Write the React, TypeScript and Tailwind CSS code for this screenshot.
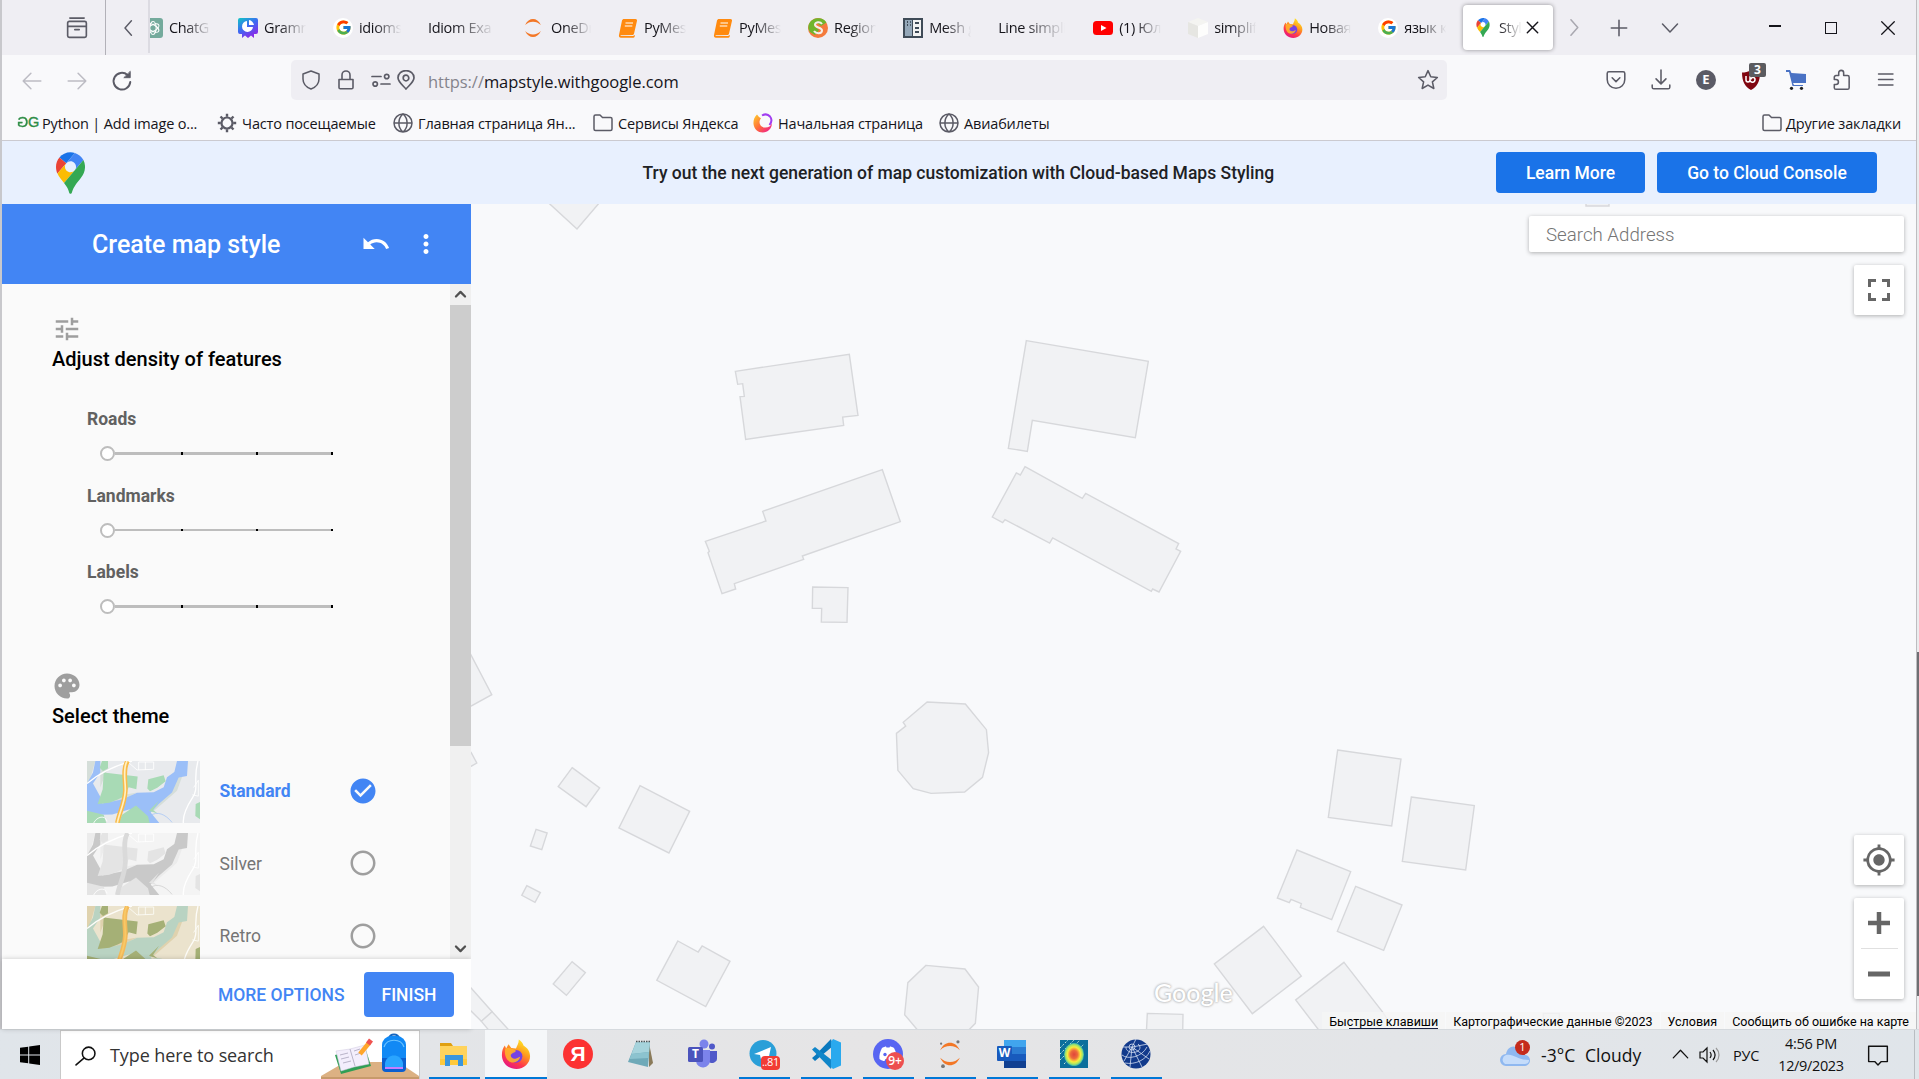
import type { ReactNode } from "react";
import {
  MdTune, MdPalette, MdUndo, MdMoreVert, MdMyLocation, MdCheckCircle, MdRadioButtonUnchecked,
} from "react-icons/md";
import { FcGoogle } from "react-icons/fc";

const UI = "font-['Open_Sans','Noto_Sans',sans-serif]";

function Pin({ className = "" }: { className?: string }) {
  return (
    <svg viewBox="0 0 92.3 132.3" className={className}>
      <path fill="#1a73e8" d="M60.2 2.2C55.8.8 51 0 46.1 0 32 0 19.3 6.4 10.8 16.5l21.8 18.3L60.2 2.2z" />
      <path fill="#ea4335" d="M10.8 16.5C4.1 24.5 0 34.9 0 46.1c0 8.7 1.7 15.7 4.6 22l28-33.3-21.8-18.3z" />
      <path fill="#4285f4" d="M46.2 28.5c9.8 0 17.7 7.9 17.7 17.7 0 4.3-1.6 8.3-4.2 11.4 0 0 13.9-16.6 27.5-32.7-5.6-10.8-15.3-19-27-22.7L32.6 34.8c3.3-3.8 8.1-6.3 13.6-6.3" />
      <path fill="#fbbc04" d="M46.2 63.8c-9.8 0-17.7-7.9-17.7-17.7 0-4.3 1.5-8.3 4.1-11.3l-28 33.3c4.8 10.6 12.8 19.2 21 29.9l34.1-40.5c-3.3 3.9-8.1 6.3-13.5 6.3" />
      <path fill="#34a853" d="M59.1 109.2c15.4-24.1 33.3-35 33.3-63 0-7.7-1.9-14.9-5.2-21.3L25.6 98c2.6 3.4 5.3 7.3 7.9 11.3 9.4 14.5 6.8 23.1 12.8 23.1s3.4-8.7 12.8-23.2" />
    </svg>
  );
}

function Firefox({ className = "" }: { className?: string }) {
  return (
    <svg viewBox="0 0 32 32" className={className}>
      <defs>
        <linearGradient id="ffx" x1="0.8" y1="0.1" x2="0.3" y2="1">
          <stop offset="0" stopColor="#ffe226" />
          <stop offset="0.35" stopColor="#ff9a1e" />
          <stop offset="0.7" stopColor="#ff3a4a" />
          <stop offset="1" stopColor="#e31587" />
        </linearGradient>
      </defs>
      <path fill="url(#ffx)" d="M19 .5c3 2 4.500 4.200 5 6.500 4 2.500 7 6 7 11.500C31 26 24.500 32 16.500 32 8 32 1.500 26 1 18 .8 13 2 10 4 7l1.500 3L8 5.500l3 4 5 .5c1-3 3-5 3-9.500z" />
      <circle cx="16" cy="18.500" r="6.800" fill="#7542e5" />
      <path fill="#ffb02a" d="M4.500 10c4-1.500 9 .5 11.500 2.500-1 2.500-4.500 2-5.500 4.500-.6 2.500 2 4.500 5 4 3-.6 3.500-2 5-2-1 4-4 6-7.500 6C7 25 3 19 4.500 10z" opacity="0.9" />
    </svg>
  );
}

function FirefoxRing({ className = "" }: { className?: string }) {
  return (
    <svg viewBox="0 0 20 20" className={className}>
      <defs>
        <linearGradient id="ring" x1="0" y1="0.2" x2="0.8" y2="1">
          <stop offset="0" stopColor="#ffbd2e" />
          <stop offset="0.5" stopColor="#ff6a3c" />
          <stop offset="1" stopColor="#f0238a" />
        </linearGradient>
      </defs>
      <path fill="url(#ring)" d="M4 1.500C1 4 .3 8 .5 11c.6 5 4.500 8.500 9.300 8.500 5 0 9.200-4 9.200-9.500-1 3-3.500 4.500-6.500 4.500-4 0-6-2.500-6-5.500 0-1.500.8-3 1.500-3.800L6 4 4 1.500z" />
      <path fill="none" stroke="#a13df0" strokeWidth="2" d="M9 2.500C12 .8 15 1.200 17 3.500c2 2.500 1.500 6-.5 8.500" />
    </svg>
  );
}

function Jupyter({ className = "", dots = false }: { className?: string; dots?: boolean }) {
  return (
    <svg viewBox="0 0 32 32" className={className}>
      <path fill="#f37726" d="M5.500 12C8 6.500 12 4 16 4s8 2.500 10.500 8C23.500 9 20 7.500 16 7.500S8.500 9 5.500 12zM5.500 20c2.500 5.500 6.500 8 10.500 8s8-2.500 10.500-8c-3 3-6.500 4.500-10.500 4.500S8.500 23 5.500 20z" />
      {dots && (
        <g fill="#767677">
          <circle cx="24.500" cy="3" r="1.700" />
          <circle cx="6.500" cy="5" r="1.200" />
          <circle cx="8.500" cy="29" r="2" />
        </g>
      )}
    </svg>
  );
}

const Book = () => (
  <svg viewBox="0 0 20 20" className="size-5">
    <path fill="#ff8a0f" d="M6 1h11.500c1 0 1.700.8 1.500 1.700l-3 13c-.2.800-1 1.300-1.800 1.300H3c-.5 0-.6.700 0 .8l12 .2 2-1-.5 2c-.2.500-.7.800-1.200.8H3C1.500 19.800.6 18.500 1 17L4 2.500C4.300 1.600 5 1 6 1z" />
    <path stroke="#fff" strokeWidth="1.100" d="M7.500 5h7.500M6.800 8h7.500" />
  </svg>
);

const favicons: Record<string, ReactNode> = {
  gpt: (
    <svg viewBox="0 0 20 20" className="size-5">
      <rect width="20" height="20" rx="3" fill="#74aa9c" />
      <g fill="none" stroke="#fff" strokeWidth="1.100">
        <ellipse cx="10" cy="10" rx="3.200" ry="6.500" />
        <ellipse cx="10" cy="10" rx="3.200" ry="6.500" transform="rotate(60 10 10)" />
        <ellipse cx="10" cy="10" rx="3.200" ry="6.500" transform="rotate(120 10 10)" />
      </g>
    </svg>
  ),
  gram: (
    <svg viewBox="0 0 20 20" className="size-5">
      <defs>
        <linearGradient id="gram" x1="0" y1="0" x2="0.6" y2="1">
          <stop offset="0" stopColor="#12c7c4" />
          <stop offset="0.500" stopColor="#3b6cf2" />
          <stop offset="1" stopColor="#8a2be8" />
        </linearGradient>
      </defs>
      <path fill="url(#gram)" d="M2 0h16a2 2 0 0 1 2 2v12a2 2 0 0 1-2 2h-2v4l-3-2.500L10 20l-3-2.500L4 20v-4H2a2 2 0 0 1-2-2V2a2 2 0 0 1 2-2z" />
      <path fill="#fff" d="M9 3a5.500 5.500 0 1 0 6 6H9V3zM11 2c2.500.3 4.500 2.500 5 5h-5V2z" />
    </svg>
  ),
  google: (
    <span className="flex size-5 items-center justify-center rounded-full bg-white">
      <FcGoogle className="size-[17px]" />
    </span>
  ),
  jup: <Jupyter className="-ml-0.5 size-6" />,
  book: <Book />,
  region: (
    <svg viewBox="0 0 20 20" className="size-5">
      <circle cx="10" cy="10" r="10" fill="#f47a3c" />
      <path fill="#6fb52c" d="M1 6C3 1.500 8-.5 13 .5c3 1 4.500 2.500 5.500 4L13 8 9 5 6 8l5 4-4 5-5-3C0 11 0 8 1 6z" />
      <path fill="none" stroke="#f3efe9" strokeWidth="2" d="M14 6c-2-3-7-2-7 .8C7 10 14 9 14 12.500c0 3.500-6 3.500-8 .5" />
    </svg>
  ),
  mesh: (
    <svg viewBox="0 0 20 20" className="size-5">
      <rect width="20" height="20" fill="#3f4b57" />
      <rect x="2" y="2" width="7" height="16" fill="#94a7b8" />
      <rect x="10" y="2" width="8" height="16" fill="#f2f2f2" />
      <path stroke="#3f4b57" strokeWidth="2" d="M12 5h4M12 10h4M12 14h4M4 4h1M4 7h1M7 4h0.800M7 7h.8" />
    </svg>
  ),
  yt: (
    <svg viewBox="0 0 20 20" className="size-5">
      <rect y="3" width="20" height="14" rx="3.500" fill="#f00" />
      <path fill="#fff" d="M8 7l5.500 3L8 13z" />
    </svg>
  ),
  cube: (
    <svg viewBox="0 0 20 20" className="size-5">
      <path fill="#f4f4f1" d="M0 4L10 0l10 4-10 4z" />
      <path fill="#e6e6e2" d="M0 4l10 4v12L0 16z" />
      <path fill="#fdfdfc" d="M20 4L10 8v12l10-4z" />
    </svg>
  ),
  ffx: <Firefox className="size-5" />,
};

const tabs: [string, string][] = [
  ["gpt", "ChatG"], ["gram", "Gramn"], ["google", "idioms"], ["", "Idiom Exa"], ["jup", "OneDr"],
  ["book", "PyMes"], ["book", "PyMes"], ["region", "Region"], ["mesh", "Mesh g"], ["", "Line simpli"],
  ["yt", "(1) Юл"], ["cube", "simplif"], ["ffx", "Новая"], ["google", "язык к"],
];

function Stroke({ d, className, w = 1.5, vb = "0 0 20 20" }: { d: string; className: string; w?: number; vb?: string }) {
  return (
    <svg viewBox={vb} className={className} fill="none" stroke="currentColor" strokeWidth={w} strokeLinecap="round" strokeLinejoin="round">
      <path d={d} />
    </svg>
  );
}

function TabStrip() {
  return (
    <div className="flex h-[55px] shrink-0 items-center bg-[#efeef3] text-[#5b5b66]">
      <div className="flex h-full w-[104px] items-center justify-end border-r border-[#b2b1b8] pr-[17px]">
        <Stroke className="size-[22px]" d="M3.500 1h13M1.500 5.500a1.500 1.500 0 0 1 1.500-1.500h14a1.500 1.500 0 0 1 1.500 1.500V17a1.500 1.500 0 0 1-1.500 1.500H3A1.500 1.500 0 0 1 1.500 17zM1.500 8.500h17M8 11.500h4" />
      </div>
      <div className="flex h-full w-[42px] items-center justify-center">
        <Stroke className="-mr-1 size-4" d="M13 1L5 10l8 9" w={1.800} />
      </div>
      <div className="h-[53px] w-0.5 self-start bg-[#dcdbe2]" />
      <div className="flex w-[1313px] overflow-hidden">
        <div className="-ml-[7px] flex">
          {tabs.map(([icon, title], i) => (
            <div key={i} className="flex w-[95.020px] shrink-0 items-center pr-[25px]">
              {icon && <span className="mr-1.5 shrink-0">{favicons[icon]}</span>}
              <span className={`min-w-0 flex-1 pt-px whitespace-nowrap text-[14.500px] tracking-[-0.350px] text-[#15141a] ${UI} [mask-image:linear-gradient(to_right,#000_35%,transparent_96%)]`}>
                {title}
              </span>
            </div>
          ))}
        </div>
      </div>
      <div className="flex h-[45px] w-[90px] shrink-0 items-center rounded bg-white pl-3 shadow-[0_0_4px_rgba(0,0,0,0.4)]">
        <Pin className="h-[19px] w-4" />
        <span className={`ml-2 w-[23px] pt-px whitespace-nowrap text-[14.500px] tracking-tight text-[#15141a] ${UI} [mask-image:linear-gradient(to_right,#000,transparent)]`}>Styl</span>
        <Stroke className="ml-1 size-[13px] text-[#15141a]" d="M2 2l16 16M18 2L2 18" w={2.200} />
      </div>
      <Stroke className="ml-3 size-[17px] text-[#a9a8b0]" d="M7 1l8 9-8 9" w={1.800} />
      <Stroke className="ml-[26px] size-[22px]" d="M10 3v14M3 10h14" w={1.400} />
      <Stroke className="ml-[30px] size-5" d="M2.500 6l7.500 8 7.500-8" />
      <div className="flex flex-1 items-center justify-end gap-[44px] pr-[21px] text-[#15141a]">
        <span className="mt-[-3px] h-[1.500px] w-3 bg-current" />
        <span className="size-3 border-[1.500px] border-current" />
        <Stroke className="size-[14px]" d="M1 1l18 18M19 1L1 19" w={1.800} />
      </div>
    </div>
  );
}

function NavBar() {
  return (
    <div className="flex h-[50px] shrink-0 items-center bg-[#f9f9fb] text-[#5b5b66]">
      <div className="flex w-[289px] items-center pt-px pl-[19px]">
        <Stroke className="size-[22px] text-[#bdbcc4]" d="M18 10H2M9 3l-7 7 7 7" w={1.400} />
        <Stroke className="ml-[23px] size-[22px] text-[#bdbcc4]" d="M2 10h16M11 3l7 7-7 7" w={1.400} />
        <svg viewBox="0 0 20 20" className="ml-[23px] size-[22px]" fill="none" stroke="currentColor" strokeWidth="1.800" strokeLinecap="round">
          <path d="M17.500 11A7.600 7.600 0 1 1 15 4.500" />
          <path d="M17.500 1.500V7h-5.500z" fill="currentColor" strokeWidth="0.800" strokeLinejoin="round" />
        </svg>
      </div>
      <div className="flex h-10 w-[1156px] items-center rounded-[5px] bg-[#efeef3] pl-2.5">
        <Stroke className="size-5" d="M10 1l8 3v5c0 5-4 8.500-8 10-4-1.500-8-5-8-10V4z" />
        <Stroke className="ml-[15px] size-5" d="M3 9.500h14v8a1.300 1.300 0 0 1-1.300 1.300H4.300A1.300 1.300 0 0 1 3 17.500zM6 9.500V5a4 4 0 0 1 8 0v4.500" w={1.600} />
        <Stroke className="ml-[15px] size-5" d="M1 6.500h9M10 14h9M13.500 6.500a2.200 2.200 0 1 0 4.400 0 2.200 2.200 0 1 0-4.400 0M2 14a2.200 2.200 0 1 0 4.400 0A2.200 2.200 0 1 0 2 14" w={1.700} />
        <Stroke className="ml-[5px] size-5" d="M10 19C7 15.500 2 12 2 7.800A7.800 7 0 0 1 18 7.800C18 12 13 15.500 10 19zM7.200 8a2.800 2.800 0 1 0 5.600 0 2.800 2.800 0 1 0-5.600 0" w={1.700} />
        <span className={`ml-3 pt-[4px] text-[16.500px] tracking-[-0.050px] text-[#15141a] ${UI}`}>
          <span className="text-[#85848c]">https://</span>mapstyle.withgoogle.com
        </span>
        <Stroke className="mr-2 ml-auto size-[22px]" d="M10 1.500l2.500 5.600 6 .6-4.500 4 1.300 6L10 14.600 4.700 17.700l1.300-6-4.500-4 6-.6z" w={1.400} />
      </div>
      <div className="flex flex-1 items-center pl-[158px]">
        <Stroke className="size-[22px]" d="M3.500 2.500h13A1.500 1.500 0 0 1 18 4v5.500a8 8 0 0 1-16 0V4a1.500 1.500 0 0 1 1.500-1.500zM6.500 8l3.500 3.500L13.500 8" w={1.400} />
        <Stroke className="ml-[23px] size-[22px]" d="M10 1v12M5.500 9l4.500 4.500L14.500 9M2 14.500v2A1.500 1.500 0 0 0 3.500 18h13a1.500 1.500 0 0 0 1.500-1.500v-2" w={1.400} />
        <span className="ml-[24px] flex size-5 items-center justify-center rounded-full bg-[#5b5b66] font-['Open_Sans'] text-[13px] font-bold text-white">E</span>
        <span className="relative ml-[25px]">
          <svg viewBox="0 0 20 20" className="size-5">
            <path fill="#800610" d="M10 0c3 2 6 2.500 9 2.500C19 12 16 16.500 10 20 4 16.500 1 12 1 2.500 4 2.500 7 2 10 0z" />
            <path fill="none" stroke="#fff" strokeWidth="1.500" d="M5 6v4c0 2.500 4 2.500 4 0V6m0 4c0 3 5 3 5-.5a2 2 0 1 0-4 0" />
          </svg>
          <span className="absolute -top-[7px] left-2 flex h-[14px] w-[17px] items-center justify-center rounded-[2px] bg-[#5b5b5f] font-['Open_Sans'] text-[12px] font-bold text-white">3</span>
        </span>
        <svg viewBox="0 0 20 20" className="ml-[25px] size-5">
          <path fill="#4a72c4" d="M0 0h4l1.500 3L20 4v9H7l1 2h9v1H6.500L3 2H0z" />
          <circle cx="5.500" cy="18.300" r="1.600" fill="#222" />
          <circle cx="15.500" cy="18.300" r="1.600" fill="#222" />
        </svg>
        <Stroke className="ml-[25px] size-[22px]" d="M7 6V3.500a2.200 2.200 0 0 1 4.500 0V6H15a1.500 1.500 0 0 1 1.500 1.500V17a1.500 1.500 0 0 1-1.500 1.500H4.500A1.500 1.500 0 0 1 3 17v-3h1.500a2 2 0 0 0 0-4.500H3v-2A1.500 1.500 0 0 1 4.500 6z" w={1.400} />
        <Stroke className="ml-[23px] size-5" d="M2.500 4h14.500M2.500 9.500h14.500M2.500 15h14.500" w={1.400} />
      </div>
    </div>
  );
}

const Globe = () => (
  <Stroke className="size-5" d="M1 10a9 9 0 1 0 18 0 9 9 0 1 0-18 0M1 10h18M10 1C4.500 5.500 4.500 14.500 10 19M10 1c5.500 4.500 5.500 13.500 0 18" w={1.500} />
);
const Folder = () => (
  <Stroke className="size-5" d="M1 3.500A1.500 1.500 0 0 1 2.500 2H7l2.500 2.500h8A1.500 1.500 0 0 1 19 6v10a1.500 1.500 0 0 1-1.500 1.500h-15A1.500 1.500 0 0 1 1 16z" w={1.500} />
);

function Gear() {
  return (
    <svg viewBox="0 0 20 20" className="size-5" fill="none" stroke="currentColor">
      <circle cx="10" cy="10" r="5.500" strokeWidth="2.200" />
      <path strokeWidth="2.400" d="M10 .8v3M10 16.200v3M.8 10h3M16.200 10h3M3.500 3.500l2 2M14.500 14.500l2 2M3.500 16.500l2-2M14.500 5.500l2-2" />
    </svg>
  );
}

const bookmarks: { icon: ReactNode; label: string; cls: string }[] = [
  { icon: <span className="flex w-5 justify-center pl-0.5 font-['Liberation_Sans'] text-[14.500px] tracking-[-1px] text-[#2f8d46] [-webkit-text-stroke:0.400px_#2f8d46]"><span className="-scale-x-100">G</span>G</span>, label: "Python | Add image o...", cls: "w-[200px]" },
  { icon: <Gear />, label: "Часто посещаемые", cls: "w-[176px]" },
  { icon: <Globe />, label: "Главная страница Ян...", cls: "w-[200px]" },
  { icon: <Folder />, label: "Сервисы Яндекса", cls: "w-[160px]" },
  { icon: <FirefoxRing className="size-5" />, label: "Начальная страница", cls: "w-[186px]" },
  { icon: <Globe />, label: "Авиабилеты", cls: "w-[120px]" },
];

function Bookmarks() {
  const t = `whitespace-nowrap pt-0.5 text-[14.500px] tracking-[-0.160px] text-[#15141a] ${UI}`;
  return (
    <div className="flex h-9 shrink-0 items-center border-b border-[#cbcad0] bg-[#f9f9fb] pl-[15px] text-[#5b5b66]">
      {bookmarks.map((b) => (
        <div key={b.label} className={`flex shrink-0 items-center gap-[5px] ${b.cls}`}>
          <span className="shrink-0">{b.icon}</span>
          <span className={t}>{b.label}</span>
        </div>
      ))}
      <div className="mr-[15px] ml-auto flex items-center gap-[4px]">
        <Folder />
        <span className={t}>Другие закладки</span>
      </div>
    </div>
  );
}

function Banner() {
  const btn = "flex h-[41px] items-center justify-center rounded bg-[#1a73e8] pt-0.5 text-[17.500px] font-medium text-white";
  return (
    <div className="flex h-[63px] shrink-0 items-center bg-[#e8f0fe]">
      <Pin className="ml-[54px] h-[42px] w-[29px]" />
      <span className="ml-[557.500px] pt-0.5 text-[17.500px] font-medium text-[#202124]">
        Try out the next generation of map customization with Cloud-based Maps Styling
      </span>
      <div className="mr-[39px] ml-auto flex gap-3">
        <div className={`w-[149px] ${btn}`}>Learn More</div>
        <div className={`w-[220px] ${btn}`}>Go to Cloud Console</div>
      </div>
    </div>
  );
}

function Slider({ label, thin = false }: { label: string; thin?: boolean }) {
  return (
    <div className="h-[76.500px]">
      <div className="text-[17.500px] leading-6 font-bold text-[#616161]">{label}</div>
      <div className="mt-[15px] ml-[13px] flex h-[15px] w-[233px] items-center">
        <span className="size-[15px] shrink-0 rounded-full border-2 border-[#bdbdbd] bg-white" />
        <div className={`flex flex-1 bg-[#bdbdbd] ${thin ? "h-0.5" : "h-[3px]"}`}>
          <span className="ml-[66px] w-0.5 bg-black" />
          <span className="ml-[73px] w-0.5 bg-black" />
          <span className="ml-auto w-0.5 bg-black" />
        </div>
      </div>
    </div>
  );
}

type Palette = { land: string; shade: string; water: string; park: string; road: string; hwy: string; core: string };

function Thumb({ c }: { c: Palette }) {
  return (
    <svg viewBox="0 0 339 187" preserveAspectRatio="none" className="h-[62px] w-[113px] shrink-0">
      <rect width="339" height="187" fill={c.land} />
      <path fill={c.shade} d="M0 0h25L5 70H0zM250 60l40-25-20 55-40 35-35 30-15-20zM40 20h25l-10 20-15 40zM150 95l-60 30-60 8 20-20z" />
      <path fill={c.water} d="M25 0h15v35L18 68l22 40 5 20 60-12 45-20 50-2 30-15 10-30 22-16 8-33h33l-3 45-25 5-20 45-40 35-24 25 30 37h-48l-12-38-35-8-50 15-70 2-10-8V75l22-40z" />
      <path fill={c.park} d="M45 0h18v22L48 30 38 20zM50 35l102 12-4 38-23-6-13 27-20 10-25 10-35 4 15-45zM184 55l46-12 6 18-25 20-22 10-8-8zM0 150l50 12 8 25H0zM95 187l10-25 42-28 36 33 5 20zM326 130l13-6v52l-14-10zM186 150l30-30-18 28 14 10z" />
      <g fill="none" stroke={c.road}>
        <path strokeWidth="4" d="M0 68C30 42 70 18 135 0M333 0c-16 55 4 80-16 110-18 28-30 55-28 77" />
        <path strokeWidth="2.500" d="M125 5l25 22 50-2V3h-45v24M175 3v24M320 80l14-22v48l-18-4M20 187c10-20 35-25 40-5" />
      </g>
      <path fill="none" stroke={c.water} strokeWidth="2" d="M190 165c20-15 45-5 65 20" />
      <path fill="none" stroke={c.hwy} strokeWidth="14" d="M122 0C106 25 116 60 115 90c-2 38-18 65-24 97" />
      <path fill="none" stroke={c.core} strokeWidth="5" d="M120 0C106 25 116 60 115 90c-2 38-18 65-24 97" />
    </svg>
  );
}

const themes: { name: string; active?: boolean; c: Palette }[] = [
  { name: "Standard", active: true, c: { land: "#e8eaed", shade: "#d5ded9", water: "#9bbff8", park: "#a8dab5", road: "#ffffff", hwy: "#f9bb4a", core: "#fff1c4" } },
  { name: "Silver", c: { land: "#f4f4f4", shade: "#ececec", water: "#c9c9c9", park: "#e4e4e4", road: "#ffffff", hwy: "#dadada", core: "#dadada" } },
  { name: "Retro", c: { land: "#ebe3cd", shade: "#dfd2ae", water: "#b9d3c2", park: "#a5b076", road: "#fdfcf8", hwy: "#f3b95a", core: "#f8c967" } },
];

function Sidebar() {
  return (
    <aside className="flex w-[469px] shrink-0 flex-col bg-[#fafafa]">
      <header className="flex h-20 shrink-0 items-center bg-[#4285f4] text-white">
        <h1 className="ml-[90px] pt-0.5 text-[25px] font-medium">Create map style</h1>
        <MdUndo className="ml-[81px] size-[30px]" />
        <MdMoreVert className="ml-5 size-[30px]" />
      </header>
      <div className="flex min-h-0 flex-1">
        <div className="min-w-0 flex-1 overflow-hidden">
          <section className="pt-[30px] pl-[50px]">
            <MdTune className="size-[30px] text-[#9e9e9e]" />
            <h2 className="text-[20px] leading-[30px] font-medium text-black">Adjust density of features</h2>
            <div className="mt-[33px] pl-[35px]">
              <Slider label="Roads" />
              <Slider label="Landmarks" thin />
              <Slider label="Labels" />
            </div>
          </section>
          <section className="pt-[34px] pl-[50px]">
            <MdPalette className="size-[30px] text-[#9e9e9e]" />
            <h2 className="text-[20px] leading-[30px] font-medium text-black">Select theme</h2>
            <div className="mt-[30px] flex flex-col gap-[10.500px] pl-[35px]">
              {themes.map((t) => (
                <div key={t.name} className="flex items-center">
                  <Thumb c={t.c} />
                  <span className={`ml-[19.500px] w-[128.500px] text-[17.500px] ${t.active ? "font-bold text-[#4285f4]" : "text-[#757575]"}`}>{t.name}</span>
                  {t.active ? <MdCheckCircle className="-mt-0.5 size-[30px] text-[#4285f4]" /> : <MdRadioButtonUnchecked className="-mt-0.5 size-[30px] text-[#9e9e9e]" />}
                </div>
              ))}
            </div>
          </section>
        </div>
        <div className="flex w-[21px] flex-col items-center bg-[#f0f0f0] text-[#505050]">
          <Stroke className="my-1 size-[13px] shrink-0" d="M3 13l7-7 7 7" w={3.500} />
          <div className="h-[441px] w-full bg-[#cdcdcd]" />
          <Stroke className="mt-auto mb-1 size-[13px]" d="M3 7l7 7 7-7" w={3.500} />
        </div>
      </div>
      <footer className="relative flex h-[70px] shrink-0 items-center justify-end bg-white pr-[17px] text-[17.500px] font-medium shadow-[0_0_5px_rgba(0,0,0,0.2)]">
        <span className="pt-0.5 text-[#4285f4]">MORE OPTIONS</span>
        <span className="ml-[19.500px] flex h-[45px] w-[90px] items-center justify-center rounded bg-[#4285f4] pt-0.5 text-white">FINISH</span>
      </footer>
    </aside>
  );
}

const mapGroups: { t: string; shapes: string[] }[] = [
  {
    t: "translate(690 320) scale(0.33333)",
    shapes: [
      "136,154 478,103 504,286 458,291 461,316 167,358 150,230 163,229 158,191 143,193",
      "1009,62 1375,124 1336,353 1027,301 1012,394 955,385",
      "46,664 228,603 218,574 577,449 631,605 337,708 341,718 133,791 137,807 96,821 54,698 58,694",
      "1005,440 1177,535 1187,520 1466,671 1458,687 1472,694 1407,816 1388,807 1384,814 1088,654 1079,669 945,599 938,608 907,591 979,459 991,465",
      "368,801 474,803 471,907 394,906 395,865 367,865",
    ],
  },
  {
    t: "translate(460 640) scale(0.35714 0.33333)",
    shapes: [
      "-20,-40 31,45 89,164 31,198 -20,220",
      "-20,320 31,337 47,369 31,379 -20,400",
      "314,383 391,444 353,500 275,440",
      "504,437 643,514 585,639 445,564",
      "213,568 244,579 229,629 197,618",
      "187,737 225,758 210,787 173,766",
      "314,965 351,998 298,1066 261,1032",
      "610,903 667,936 678,918 756,964 688,1100 551,1021",
      "1308,186 1415,192 1474,269 1480,338 1463,412 1413,456 1319,460 1269,446 1226,391 1222,280 1248,258 1241,247",
      "1305,976 1414,987 1452,1041 1443,1150 1420,1175 1285,1175 1245,1124 1254,1028",
      "-20,984 31,1044 90,1115 60,1144 31,1113 -20,1060",
      "90,1115 140,1174 84,1175 60,1144",
    ],
  },
  {
    t: "translate(1130 740) scale(0.33333)",
    shapes: [
      "623,30 813,57 785,258 595,232",
      "844,171 1033,197 1007,390 817,364",
      "501,330 662,395 605,539 511,502 514,491 483,478 478,488 442,474",
      "677,439 816,495 761,631 622,574",
      "401,559 514,708 367,821 253,672",
      "642,667 757,815 800,880 574,880 497,780",
      "52,820 159,823 158,880 49,880",
      "1240,820 1288,820 1288,880 1240,880",
    ],
  },
  { t: "translate(0 0)", shapes: ["540,195 577,229 606,195", "1586,195 1609,195 1609,206 1586,206"] },
];

function MapView() {
  const card = "rounded-[2px] bg-white shadow-[0_1px_4px_rgba(0,0,0,0.3)]";
  return (
    <main className="relative min-w-0 flex-1 overflow-hidden bg-[#f8f9fb]">
      <svg viewBox="471 204 1445 825" className="block h-[825px] w-[1445px]">
        {mapGroups.map((g) => (
          <g key={g.t} transform={g.t} fill="#f1f2f4" stroke="#d7d8db" strokeWidth="1.400">
            {g.shapes.map((s) => <polygon key={s} points={s} vectorEffect="non-scaling-stroke" />)}
          </g>
        ))}
      </svg>
      <div className={`absolute top-3 right-3 flex h-9 w-[375px] items-center pt-0.5 pl-[17px] text-[18.700px] font-light text-[#757575] ${card}`}>Search Address</div>
      <div className={`absolute top-[61px] right-3 flex size-[50px] items-center justify-center text-[#666] ${card}`}>
        <svg viewBox="0 0 22 22" className="size-[22px]" fill="none" stroke="currentColor" strokeWidth="3"><path d="M1.500 8V1.500H8M14 1.500h6.500V8M20.500 14v6.500H14M8 20.500H1.500V14" /></svg>
      </div>
      <div className={`absolute top-[631px] right-3 flex size-[50px] items-center justify-center text-[#666] ${card}`}><MdMyLocation className="size-[34px]" /></div>
      <div className={`absolute top-[694px] right-3 flex h-[101px] w-[50px] flex-col items-center text-[#666] ${card}`}>
        <svg viewBox="0 0 22 22" className="my-[14px] size-[22px]"><path stroke="currentColor" strokeWidth="4.500" d="M11 0v22M0 11h22" /></svg>
        <span className="h-px w-[37px] bg-[#e0e0e0]" />
        <svg viewBox="0 0 22 22" className="mt-[14px] size-[22px]"><path stroke="currentColor" strokeWidth="5" d="M0 11h22" /></svg>
      </div>
      <div className="absolute top-[772px] left-[683px] font-['Lato'] text-[25px] leading-8 font-medium text-white [text-shadow:0_0_2px_#aaa,0_0_3px_#bbb]">Google</div>
      <div className="absolute right-0 bottom-0 flex gap-px text-[12.500px] leading-[15px] text-black *:bg-[#f5f5f5]/80 *:px-[7px] *:pt-0.5">
        <span className="relative">
          Быстрые клавиши
          <span className="absolute right-[7px] bottom-0 left-[27px] h-px bg-[#1a2040]" />
        </span>
        <span>Картографические данные ©2023</span>
        <span>Условия</span>
        <span>Сообщить об ошибке на карте</span>
      </div>
    </main>
  );
}

const Y = "size-[30px]";
const apps: { node: ReactNode; bar?: boolean; active?: boolean }[] = [
  { bar: true, node: (
    <svg viewBox="0 0 30 30" className={Y}>
      <path fill="#e0a010" d="M1 4h11l2 3H1z" /><path fill="#ffd35c" d="M1 7h27v19H1z" /><path fill="#ffc93c" d="M1 20h27v6H1z" />
      <path fill="#3b96dd" d="M6 16h18v11h-5v-6h-8v6H6z" />
    </svg>) },
  { bar: true, active: true, node: <Firefox className={Y} /> },
  { node: <span className="flex size-[30px] items-center justify-center rounded-full bg-[#fc3232] font-['Liberation_Sans'] text-[21px] font-bold text-white">Я</span> },
  { node: (
    <svg viewBox="0 0 30 30" className={Y}>
      <path fill="#8a7a5a" d="M24 4l4 20-4 4z" /><path fill="#6fa9b8" d="M11 3h14l-2 25-20-5z" /><path fill="#a6d3dc" d="M11 3h14l-1 10L6.500 15z" /><path fill="#8cc3cf" d="M6.500 15L24 13l-.5 6L4.500 20z" /><path stroke="#4a5558" strokeWidth="1.500" strokeDasharray="1.500 1" d="M11 2.500h14" />
    </svg>) },
  { node: (
    <span className="relative">
      <svg viewBox="0 0 30 30" className={Y}>
        <circle cx="17" cy="5" r="4.500" fill="#7b83eb" /><circle cx="25" cy="7.500" r="3" fill="#5059c9" /><path fill="#5059c9" d="M22 12h8v8a5 5 0 0 1-8 3z" /><path fill="#7b83eb" d="M9 11h14v10a7 7 0 0 1-14 1z" />
        <rect x="1" y="8" width="15" height="15" rx="1.500" fill="#4b53bc" />
      </svg>
      <span className="absolute top-2 left-px flex size-[15px] items-center justify-center font-['Open_Sans'] text-[12px] font-bold text-white">T</span>
    </span>) },
  { bar: true, node: (
    <span className="relative">
      <svg viewBox="0 0 30 30" className={Y}><circle cx="14" cy="14.500" r="13.500" fill="#2a9fd8" /><path fill="#fff" d="M5 15l17-7-3 14-5-4-2 2.500-1-4.500z" /></svg>
      <span className="absolute top-[17px] left-[12px] flex h-[14px] w-[19px] items-center justify-center rounded bg-[#f23c34] font-['Open_Sans'] text-[11px] tracking-[-0.300px] text-white">..81</span>
    </span>) },
  { bar: true, node: (
    <svg viewBox="0 0 30 30" className={Y}>
      <path fill="#0a79be" d="M20 0L4 16.500 1 19l3 3L22 7z" /><path fill="#1186c9" d="M22 22L4 8 1 10.500 20 30z" /><path fill="#2aa9ee" d="M22 0l8 3.500v23L22 30l-2-2V3z" />
    </svg>) },
  { bar: true, node: (
    <span className="relative">
      <svg viewBox="0 0 30 30" className={Y}><circle cx="15" cy="15" r="15" fill="#5865f2" /><path fill="#fff" d="M9 9c2-1 3-1.500 4-1.500l.5 1h3l.5-1c1 0 2.500.5 4 1.500 2 4 3 7 2.500 11-2 1.500-3.500 2-5 2L17.500 20h-5L11.500 22c-1.500 0-3-.5-5-2C6 16 7 13 9 9z" /><circle cx="12" cy="15.500" r="1.700" fill="#5865f2" /></svg>
      <span className="absolute top-[13px] left-[13px] flex size-[18px] items-center justify-center rounded-full bg-[#ed4f4f] font-['Open_Sans'] text-[12px] font-semibold text-white">9+</span>
    </span>) },
  { bar: true, node: <Jupyter dots className="size-[30px]" /> },
  { bar: true, node: (
    <span className="relative">
      <svg viewBox="0 0 30 30" className={Y}>
        <path fill="#41a5ee" d="M7 1h22v7H7z" /><path fill="#2b7cd3" d="M7 8h22v7H7z" /><path fill="#185abd" d="M7 15h22v7H7z" /><path fill="#103f91" d="M7 22h22v7H7z" />
        <rect y="7" width="15" height="15" rx="1" fill="#185abd" />
      </svg>
      <span className="absolute top-[7px] left-0 flex size-[15px] items-center justify-center font-['Open_Sans'] text-[12px] font-bold text-white">W</span>
    </span>) },
  { bar: true, node: (
    <svg viewBox="0 0 28 28" className="size-7">
      <defs>
        <radialGradient id="heat">
          <stop offset="0" stopColor="#e0453a" /><stop offset="0.35" stopColor="#ec6a3c" /><stop offset="0.5" stopColor="#f7a63a" />
          <stop offset="0.65" stopColor="#f6ee3c" /><stop offset="0.85" stopColor="#a5e36a" /><stop offset="1" stopColor="#2fb3b0" />
        </radialGradient>
      </defs>
      <rect width="28" height="28" fill="#0b6f9c" /><path stroke="#bfe6dd" strokeWidth="1" strokeDasharray="2 1.500" d="M0 8L8 0M0 14L14 0M0 20L20 0M4 24L24 4" />
      <ellipse cx="14" cy="14.500" rx="10" ry="11.500" fill="url(#heat)" />
    </svg>) },
  { bar: true, node: (
    <svg viewBox="0 0 30 30" className={Y}>
      <circle cx="15" cy="15" r="14.500" fill="#123a8c" /><g fill="none" stroke="#d5dff2" strokeWidth="0.800"><path d="M11 8L3 22M11 8l-2 20M11 8l10 20M11 8l17 12M11 8l16-3M11 8L15 0M11 8L2 8M5 8a7 5 0 1 0 12-3M1 16c6 5 20 2 25-8M4 24c10 2 21-3 25-12" /><circle cx="11" cy="8" r="3" /></g>
    </svg>) },
];

function Taskbar() {
  return (
    <div className={`flex h-[50px] shrink-0 border-t border-[#d6dade] bg-linear-to-r from-[#e0e5ea] via-[#e6e5e6] via-45% to-[#e0e5ea] text-[#111] ${UI}`}>
      <div className="flex w-[60px] items-center justify-center">
        <svg viewBox="0 0 20 20" className="size-5"><path d="M0 2.800L8.200 1.700v7.800H0zM9.200 1.500L20 0v9.500H9.200zM0 10.500h8.200v7.800L0 17.200zM9.200 10.500H20V20L9.200 18.500z" /></svg>
      </div>
      <div className="flex w-[360px] items-center overflow-hidden border border-b-0 border-[#c9c9c9] bg-white">
        <Stroke className="ml-[14px] size-[21px]" d="M7 8a6 6 0 1 0 12 0 6 6 0 1 0-12 0M8.500 12.500L1 19" w={1.500} />
        <span className="ml-[14px] w-[165px] text-[18px] tracking-[-0.100px] whitespace-nowrap text-[#333]">Type here to search</span>
        <svg viewBox="0 0 98 47" className="ml-auto h-[47px] w-[98px] shrink-0">
          <path fill="#dcb183" d="M0 44l24-14h53l21 14v3H0z" /><path fill="#c79a6b" d="M0 45h98v2H0z" />
          <g transform="translate(0 1)">
            <path fill="#2f9e55" d="M14 22l30-8 6 19-30 8z" /><path fill="#f3eefc" stroke="#cfc8de" strokeWidth="0.500" d="M15 18l14-2 15-4 4 19-15 3-13 4z" /><path stroke="#b9b4c9" strokeWidth="1" fill="none" d="M29 16l5 17M19 22l8-2M20 26l8-2M22 30l8-2M33 18l6-2M34 22l6-2" />
            <path stroke="#ffa62b" strokeWidth="4.500" d="M39 21l9-11" /><path stroke="#ef5350" strokeWidth="5" d="M47 11l3-4" />
          </g>
          <path fill="none" stroke="#1565c0" strokeWidth="2" d="M68 7c0-6 10-6 10 0" />
          <rect x="61" y="4" width="24" height="36" rx="9" fill="#1189f5" /><path fill="#0b5fd0" d="M61 26h24v10a4 4 0 0 1-4 4H65a4 4 0 0 1-4-4z" /><path fill="#2aa5ff" d="M64 31c2-10 16-10 18 0v4H64z" /><path stroke="#c77dff" strokeWidth="2" d="M64 36h18" /><path fill="none" stroke="#6cc3ff" strokeWidth="1.200" d="M63 15c3-9 17-9 20 0" />
        </svg>
      </div>
      <div className="ml-[3px] flex">
        {apps.map((a, i) => (
          <div key={i} className={`flex w-[62px] flex-col items-center ${a.active ? "bg-[#f5f7f9]" : ""}`}>
            <div className="flex flex-1 items-center justify-center">{a.node}</div>
            <div className={`h-0.5 ${a.active ? "w-full" : "w-[51px]"} ${a.bar ? "bg-[#0078d7]" : ""}`} />
          </div>
        ))}
      </div>
      <div className="ml-auto flex items-center border-r border-[#b8bdc2] pr-[25px]">
        <span className="relative">
          <svg viewBox="0 0 30 26" className="-mt-0.5 h-[26px] w-[30px]"><path fill="#8fb8f0" d="M6 25a6 6 0 0 1 0-12C7 7 12 4 16 6c4 1 6 4 6 8 5-1 8 2 8 5.500S27 25 24 25z" /><path fill="#c5dcfa" d="M5 23a5 5 0 0 1 1-9c7-2 12 5 23 5 0 3-2 4-5 4z" /></svg>
          <span className="absolute -top-[3px] left-[15px] flex size-[15px] items-center justify-center rounded-full bg-[#c42b1c] text-[11px] text-white">1</span>
        </span>
        <span className="ml-[11px] w-11 pt-0.5 text-[17.500px]">-3°C</span>
        <span className="w-[87px] pt-0.5 text-[17.500px]">Cloudy</span>
        <Stroke className="size-[17px]" d="M1.500 14L10 5l8.500 9" w={1.500} />
        <svg viewBox="0 0 22 18" className="ml-2.5 h-[18px] w-[22px]" fill="none" stroke="currentColor" strokeWidth="1.200"><path d="M1 6h3l4-4v14l-4-4H1zM11 6c1.500 2 1.500 4 0 6M14 4c2.500 3 2.500 7 0 10" /><path stroke="#999" d="M17 2c4 4 4 10 0 14" /></svg>
        <span className="ml-[12px] w-11 pt-0.5 text-[14.500px] tracking-[-0.200px]">РУС</span>
        <div className="flex w-[68px] flex-col items-center text-[14.500px] leading-[22px] tracking-[-0.350px] whitespace-nowrap"><span>4:56 PM</span><span>12/9/2023</span></div>
        <Stroke className="ml-[22px] size-[22px]" d="M1.500 2h17v14h-5.500l-3 3-3-3H1.500z" w={1.300} />
      </div>
      <div className="w-1" />
    </div>
  );
}

export default function App() {
  return (
    <div className="flex h-[1079px] w-[1919px] flex-col overflow-hidden bg-[#e9e9ea] font-['Roboto',sans-serif]">
      <div className="flex min-h-0 flex-1">
        <div className="w-0.5 bg-[#c8c8cc]" />
        <div className="flex w-[1914px] flex-col">
          <TabStrip />
          <NavBar />
          <Bookmarks />
          <Banner />
          <div className="flex min-h-0 flex-1">
            <Sidebar />
            <MapView />
          </div>
        </div>
        <div className="flex w-[3px] flex-col border-l border-[#bdbdc0] bg-[#ececee]">
          <div className="mt-[652px] h-[344px] w-full bg-[#6f6f73]" />
        </div>
      </div>
      <Taskbar />
    </div>
  );
}
